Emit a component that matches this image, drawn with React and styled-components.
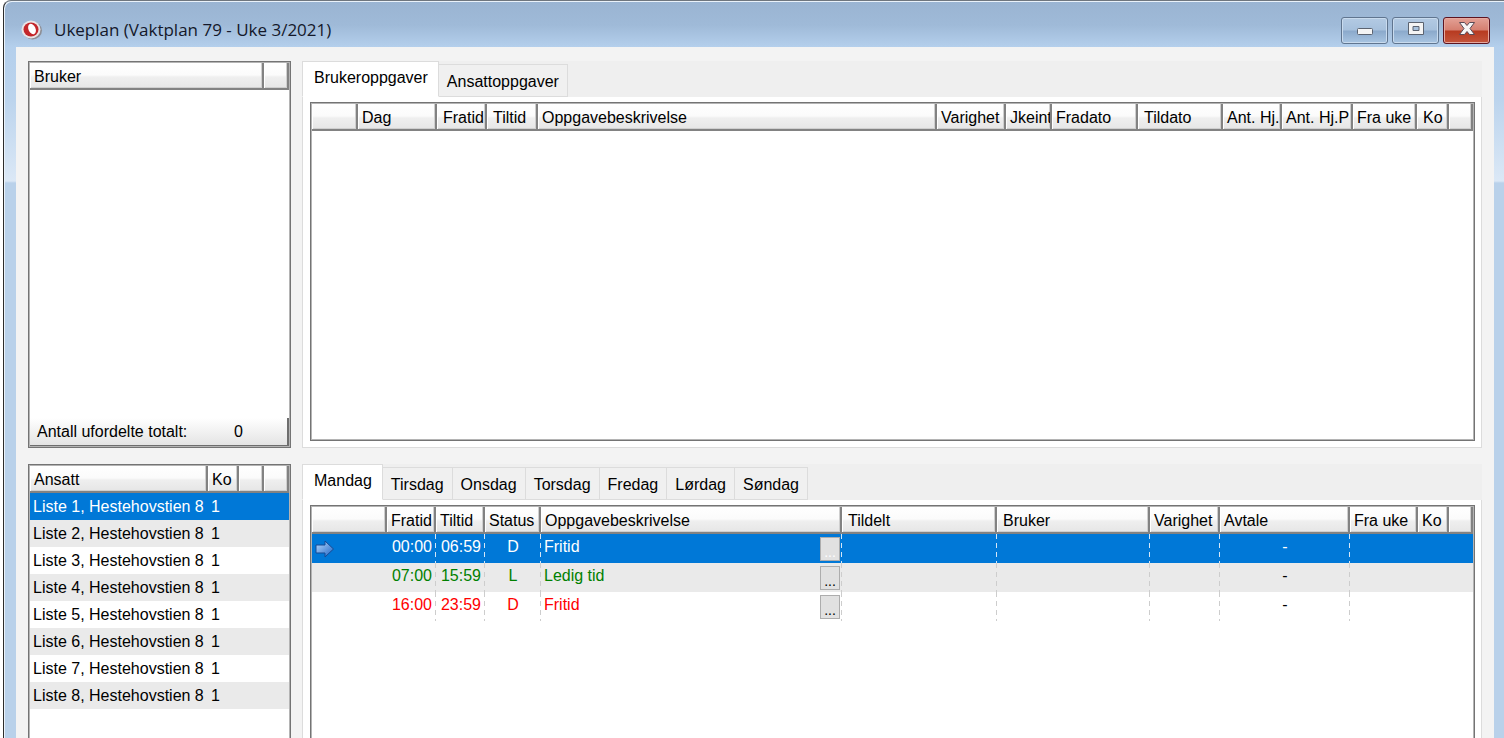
import React, { useState } from "react";
import styled, { createGlobalStyle, css } from "styled-components";

const GlobalStyle = createGlobalStyle`
  *, *::before, *::after { box-sizing: border-box; }
  html, body { margin: 0; background: #fff; }
  body, button {
    font-family: "Liberation Sans", Arial, sans-serif;
    font-size: 16px;
    line-height: 20px;
    color: #000;
  }
  button { cursor: pointer; }
`;

const Frame = styled.div`
  display: flex;
  flex-direction: column;
  height: 100vh;
  min-height: 640px;
  margin-left: 3px;
  padding: 0 10px 0 12px;
  overflow: hidden;
  border-left: 1px solid #2c2c2c;
  border-top: 1px solid #6f767e;
  border-top-left-radius: 8px;
  background: linear-gradient(#9ab4d2 0, #9fbad8 24px, #b4cfec 46px, #bcd4ed 100px, #dbe8f6 180px, #b9d1ea 182px);
  box-shadow: inset 1px 1px 0 #eaf2fa;
`;

const TitleBar = styled.header`
  display: flex;
  align-items: center;
  height: 46px;
  flex: none;
  padding: 12px 4px 0 5px;
`;

const Title = styled.h1`
  flex: 1;
  margin: 0 0 0 11px;
  font: 400 17px/24px "Open Sans", "Noto Sans", sans-serif;
  color: #14182a;
`;

const WindowButtons = styled.div`
  display: flex;
  gap: 4px;
`;

const WindowButton = styled.button`
  display: grid;
  place-items: center;
  width: 47px;
  height: 27px;
  padding: 0 0 3px;
  border-radius: 3px;
  border: 1px solid ${(p) => (p.$close ? "#5d1420" : "#60758f")};
  box-shadow: inset 0 0 0 1px ${(p) => (p.$close ? "#e6a9a0" : "#c9dbee")};
  background: ${(p) =>
    p.$close
      ? "linear-gradient(#e3a196 0, #d57f70 12px, #b73a20 13px, #c4553c 100%)"
      : "linear-gradient(#b3cae3 0, #a6c0dc 12px, #8ba9cb 13px, #a9c5e2 100%)"};
`;

const Body = styled.main`
  display: grid;
  flex: 1;
  min-height: 0;
  grid-template-columns: 263px minmax(0, 1fr);
  grid-template-rows: 387px minmax(0, 1fr);
  gap: 16px 11px;
  padding: 14px 12px 0 12px;
  background: #f3f3f3;
`;

const Panel = styled.section`
  display: flex;
  flex-direction: column;
  min-height: 0;
  overflow: hidden;
  padding: 1px 1px ${(p) => (p.$open ? 0 : 1)}px;
  background: linear-gradient(#fff, #fff) content-box, #b4b4b4;
  border: 1px solid #747474;
  border-bottom-width: ${(p) => (p.$open ? 0 : 1)}px;
  ${(p) => p.$grow && "flex: 1;"}
`;

const Footer = styled.footer`
  display: flex;
  margin-top: auto;
  padding: 4px 44px 3px 7px;
  justify-content: space-between;
  background: linear-gradient(#fff, #e4e4e4);
  border-right: 2px solid #6e6e6e;
  border-bottom: 1px solid #6e6e6e;
`;

const Tabbed = styled.section`
  display: flex;
  flex-direction: column;
  min-width: 0;
  min-height: 0;
  background: #efefef;
`;

const TabList = styled.div`
  display: flex;
  align-items: flex-end;
  height: 36px;
`;

const Tab = styled.button`
  height: 33px;
  padding: 2px 8px 0;
  white-space: nowrap;
  background: #f0f0f0;
  border: 1px solid #dcdcdc;
  border-left-width: 0;
  ${(p) =>
    p.$active &&
    css`
      height: 36px;
      padding: 0 10px 2px 11px;
      background: #fff;
      border-left-width: 1px;
      border-bottom-color: #fff;
    `}
`;

const TabPage = styled.div`
  display: flex;
  flex: 1;
  min-height: 0;
  padding: 5px 6px ${(p) => (p.$open ? 0 : 6)}px 7px;
  background: #fff;
  border: 1px solid #dcdcdc;
  border-top-width: 0;
  border-bottom-width: ${(p) => (p.$open ? 0 : 1)}px;
`;

const Table = styled.table`
  width: 100%;
  table-layout: fixed;
  border-spacing: 0;
`;

const Th = styled.th`
  height: 27px;
  padding: 3px 0 0 ${(p) => (p.$wide ? 6 : 4)}px;
  overflow: hidden;
  white-space: nowrap;
  text-align: left;
  font-weight: 400;
  background: linear-gradient(#fff 0, #fbfbfb 12px, #efefef 14px, #e6e6e6 100%);
  border-right: 2px solid #828282;
  border-bottom: 2px solid #828282;
  box-shadow: inset 1px 0 0 #fff, inset -1px -1px 0 #cfcfcf;
`;

const tones = { free: "#ff0000", open: "#008000", plain: "#000" };

const Row = styled.tr`
  height: ${(p) => p.$height}px;
  color: ${(p) => (p.$selected ? "#fff" : tones[p.$tone || "plain"])};
  background: ${(p) => (p.$selected ? "#0078d7" : p.$striped ? "#eaeaea" : "#fff")};
  --dash: ${(p) => (p.$selected ? "#d4e6f7" : "#cdcdcd")};
`;

const Td = styled.td`
  padding: 0 ${(p) => (p.$align === "right" ? 4 : 0)}px ${(p) => (p.$ruled ? 3 : 0)}px ${(p) => (p.$align ? 0 : 3)}px;
  overflow: hidden;
  white-space: nowrap;
  text-align: ${(p) => p.$align || "left"};
  ${(p) =>
    p.$ruled &&
    css`
      background: repeating-linear-gradient(var(--dash) 0 5px, transparent 5px 9px) right top / 1px 100% no-repeat;
    `}
`;

const Task = styled.div`
  display: flex;
  justify-content: space-between;
  align-items: center;
  padding-right: 2px;
`;

const MoreButton = styled.button`
  width: 20px;
  height: 24px;
  margin: 2px 0 -2px;
  padding: 5px 0 0;
  font-size: 14px;
  line-height: 16px;
  background: #e1e1e1;
  border: 1px solid #adadad;
  color: ${(p) => (p.$selected ? "#fff" : "#000")};
`;

const Icon = styled.svg`
  display: block;
  flex: none;
`;

const LogoIcon = () => (
  <Icon width="22" height="20" viewBox="0 0 22 20">
    <ellipse cx="11.500" cy="10.500" rx="9.500" ry="9" fill="#8d8f96" />
    <ellipse cx="10" cy="9.500" rx="9.500" ry="9" fill="#e9e4e6" />
    <ellipse cx="10" cy="9.500" rx="7.500" ry="7" fill="#c3272b" />
    <ellipse cx="11" cy="9" rx="3.500" ry="5.500" transform="rotate(-24 11 9)" fill="#fff" />
  </Icon>
);

const ArrowIcon = () => (
  <Icon width="20" height="18" viewBox="0 0 20 18">
    <defs>
      <linearGradient id="arrow" x1="0" x2="1" y1="0" y2="1">
        <stop offset="0" stopColor="#b9dcff" />
        <stop offset="1" stopColor="#1c62c4" />
      </linearGradient>
    </defs>
    <path d="M1 5H10V1L18.500 9L10 17V13H1Z" fill="url(#arrow)" stroke="#174a94" />
  </Icon>
);

const MinimizeIcon = () => (
  <Icon width="18" height="15" viewBox="0 0 18 15">
    <rect x="1.500" y="7.500" width="15" height="6" rx="1" fill="#f4f4f4" stroke="#5b6370" />
  </Icon>
);

const MaximizeIcon = () => (
  <Icon width="18" height="15" viewBox="0 0 18 15">
    <path fillRule="evenodd" d="M1.500 1.500H16.500V13.500H1.500ZM6 5.500V9.500H12V5.500Z" fill="#f4f4f4" stroke="#5b6370" />
  </Icon>
);

const CloseIcon = () => (
  <Icon width="18" height="15" viewBox="0 0 18 15">
    <path
      d="M1.500 1.500H6.500L9 4.500L11.500 1.500H16.500L12 7.500L16.500 13.500H11.500L9 10.500L6.500 13.500H1.500L6 7.500Z"
      fill="#f6f6f6"
      stroke="#5a4a55"
    />
  </Icon>
);

function HeaderRow({ columns }) {
  return (
    <>
      <colgroup>
        {columns.map(([, width], i) => (
          <col key={i} width={width} />
        ))}
      </colgroup>
      <thead>
        <tr>
          {columns.map(([label, , wide], i) => (
            <Th key={i} scope="col" $wide={wide}>
              {label}
            </Th>
          ))}
        </tr>
      </thead>
    </>
  );
}

function Tabs({ names }) {
  const [active, setActive] = useState(names[0]);
  return (
    <TabList role="tablist">
      {names.map((name) => (
        <Tab key={name} role="tab" aria-selected={name === active} $active={name === active} onClick={() => setActive(name)}>
          {name}
        </Tab>
      ))}
    </TabList>
  );
}

const userColumns = [["Bruker"], ["", 25]];

const staffColumns = [["Ansatt"], ["Ko", 31], ["", 25], ["", 25]];

const taskColumns = [
  ["", 46], ["Dag", 79], ["Fratid", 50, true], ["Tiltid", 51, true], ["Oppgavebeskrivelse"],
  ["Varighet", 69], ["Jkeint", 46], ["Fradato", 86], ["Tildato", 85, true], ["Ant. Hj.", 59],
  ["Ant. Hj.P", 71], ["Fra uke", 64], ["Ko", 32, true], ["", 24],
];

const dayColumns = [
  ["", 75], ["Fratid", 49], ["Tiltid", 49], ["Status", 56], ["Oppgavebeskrivelse"],
  ["Tildelt", 155, true], ["Bruker", 153, true], ["Varighet", 70], ["Avtale", 130], ["Fra uke", 68],
  ["Ko", 31], ["", 24],
];

const staff = [1, 2, 3, 4, 5, 6, 7, 8].map((n) => `Liste ${n}, Hestehovstien 8`);

const shifts = [
  { from: "00:00", to: "06:59", status: "D", task: "Fritid", tone: "free" },
  { from: "07:00", to: "15:59", status: "L", task: "Ledig tid", tone: "open" },
  { from: "16:00", to: "23:59", status: "D", task: "Fritid", tone: "free" },
];

const Dash = styled.span`
  color: ${(p) => (p.$selected ? "#fff" : "#000")};
`;

export default function App() {
  return (
    <>
      <GlobalStyle />
      <Frame>
        <TitleBar>
          <LogoIcon />
          <Title>Ukeplan (Vaktplan 79 - Uke 3/2021)</Title>
          <WindowButtons>
            <WindowButton aria-label="Minimer"><MinimizeIcon /></WindowButton>
            <WindowButton aria-label="Maksimer"><MaximizeIcon /></WindowButton>
            <WindowButton aria-label="Lukk" $close><CloseIcon /></WindowButton>
          </WindowButtons>
        </TitleBar>
        <Body>
          <Panel>
            <Table><HeaderRow columns={userColumns} /></Table>
            <Footer>
              <span>Antall ufordelte totalt:</span>
              <span>0</span>
            </Footer>
          </Panel>

          <Tabbed>
            <Tabs names={["Brukeroppgaver", "Ansattoppgaver"]} />
            <TabPage>
              <Panel $grow>
                <Table><HeaderRow columns={taskColumns} /></Table>
              </Panel>
            </TabPage>
          </Tabbed>

          <Panel $open>
            <Table>
              <HeaderRow columns={staffColumns} />
              <tbody>
                {staff.map((name, i) => (
                  <Row key={name} $height={27} $selected={i === 0} $striped={i % 2 === 1}>
                    <Td>{name}</Td>
                    <Td>1</Td>
                    <Td />
                    <Td />
                  </Row>
                ))}
              </tbody>
            </Table>
          </Panel>

          <Tabbed>
            <Tabs names={["Mandag", "Tirsdag", "Onsdag", "Torsdag", "Fredag", "Lørdag", "Søndag"]} />
            <TabPage $open>
              <Panel $open $grow>
                <Table>
                  <HeaderRow columns={dayColumns} />
                  <tbody>
                    {shifts.map((s, i) => (
                      <Row key={s.from} $height={29} $tone={s.tone} $selected={i === 0} $striped={i === 1}>
                        <Td>{i === 0 && <ArrowIcon />}</Td>
                        <Td $ruled $align="right">{s.from}</Td>
                        <Td $ruled $align="right">{s.to}</Td>
                        <Td $ruled $align="center">{s.status}</Td>
                        <Td $ruled>
                          <Task>
                            {s.task}
                            <MoreButton aria-label={`Velg oppgave ${s.from}`} $selected={i === 0}>...</MoreButton>
                          </Task>
                        </Td>
                        <Td $ruled />
                        <Td $ruled />
                        <Td $ruled />
                        <Td $ruled $align="center"><Dash $selected={i === 0}>-</Dash></Td>
                        <Td />
                        <Td />
                        <Td />
                      </Row>
                    ))}
                  </tbody>
                </Table>
              </Panel>
            </TabPage>
          </Tabbed>
        </Body>
      </Frame>
    </>
  );
}
